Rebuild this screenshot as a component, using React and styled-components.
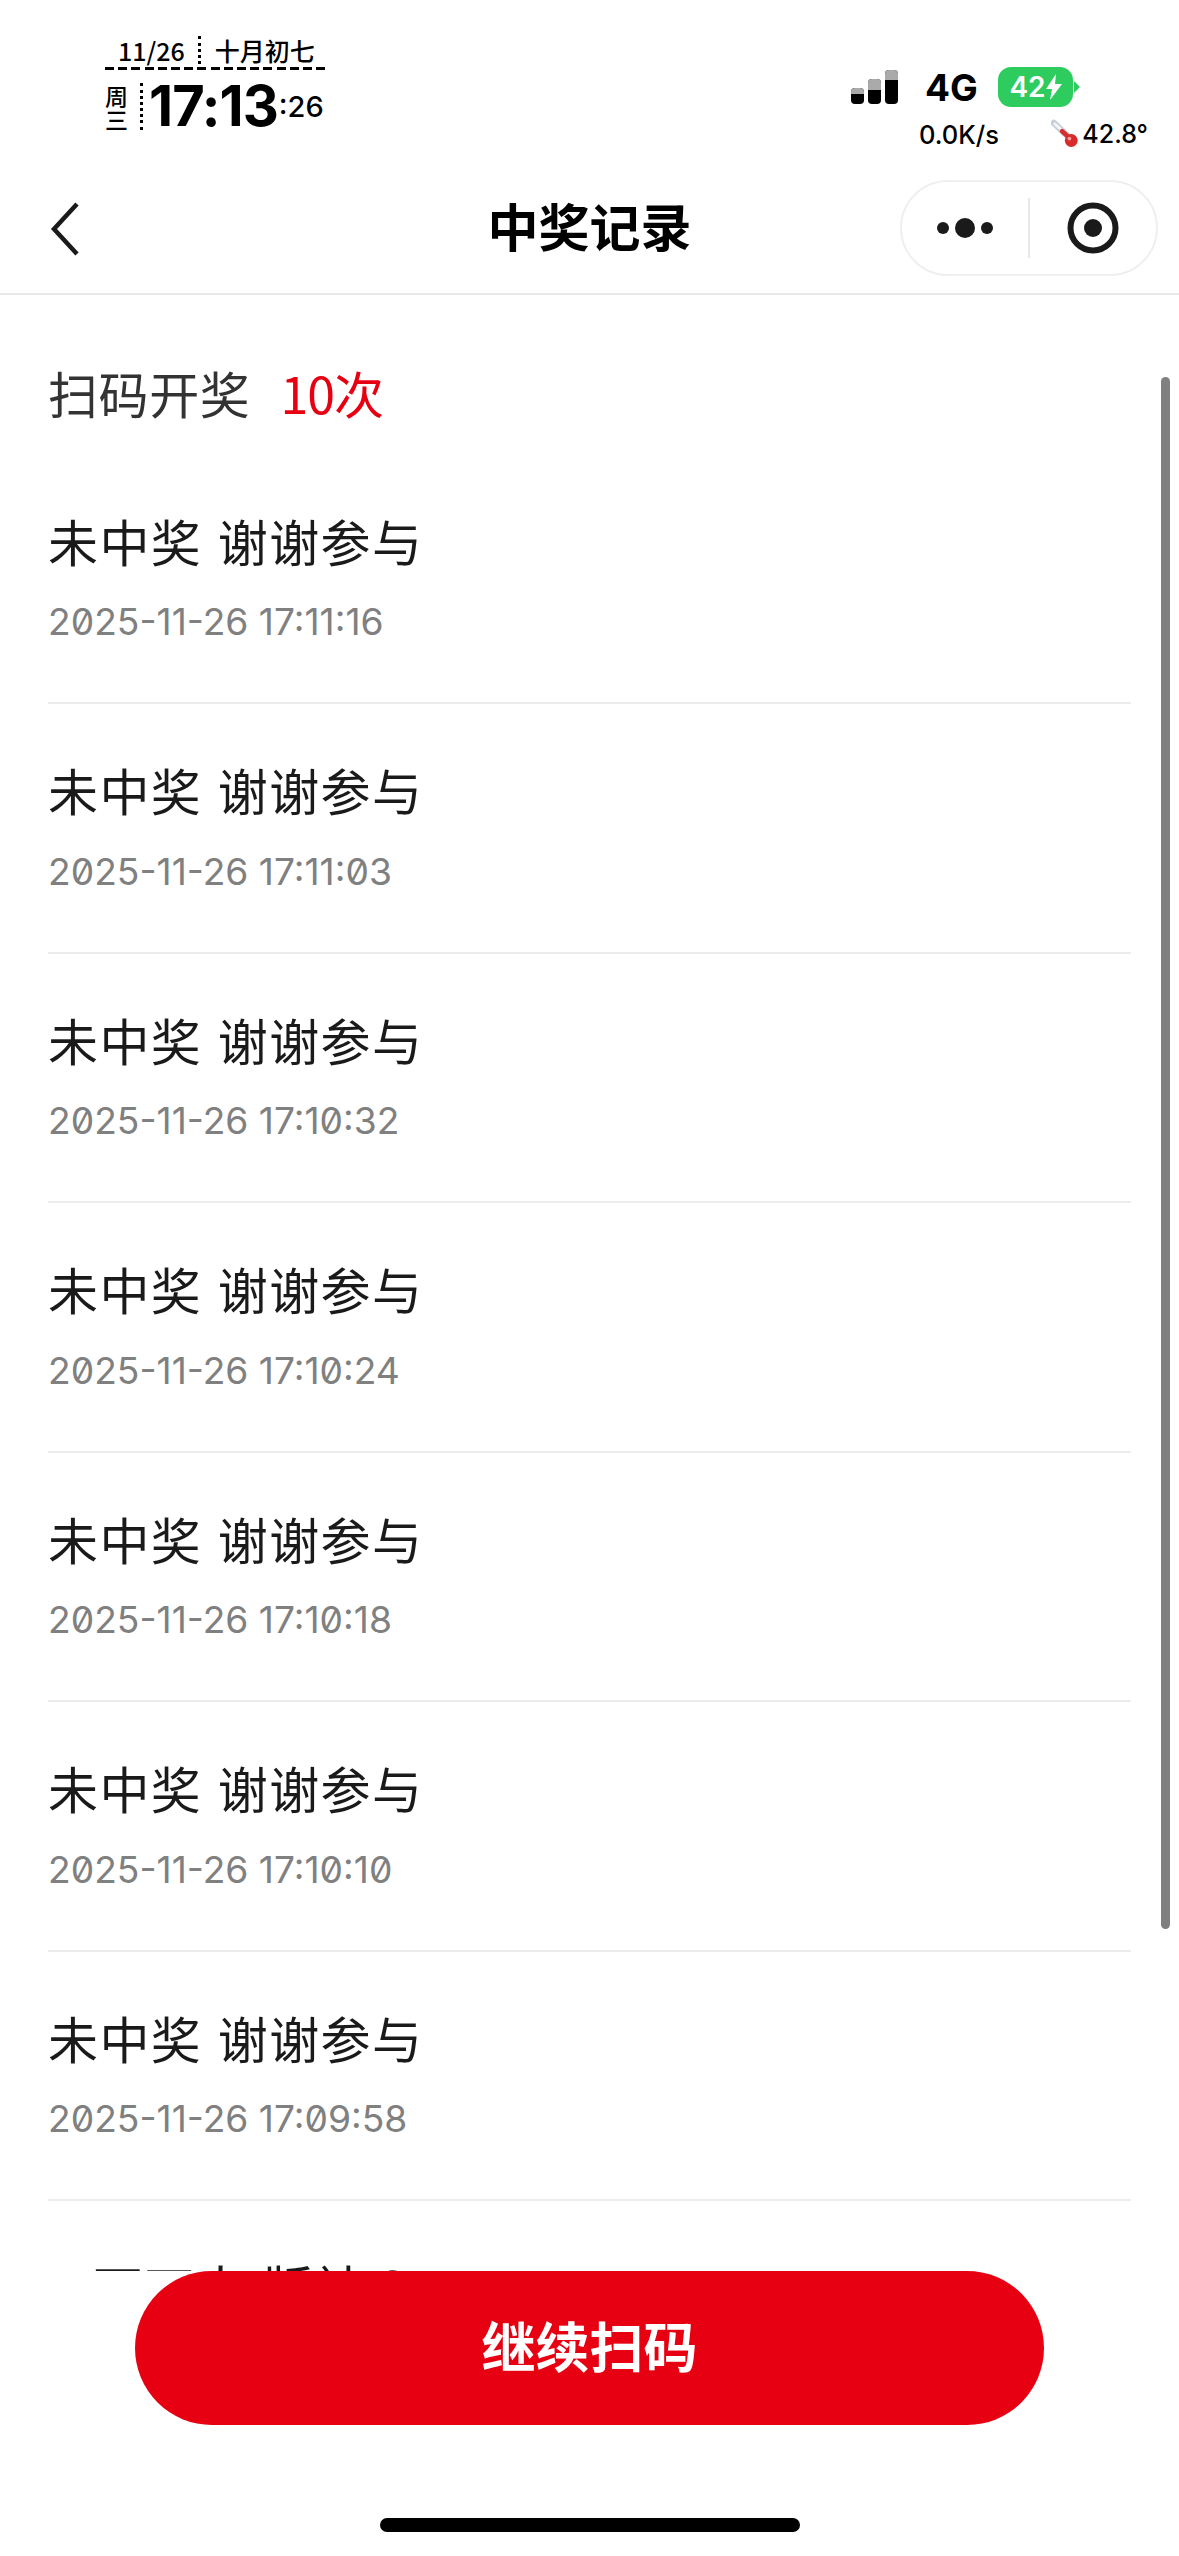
import React from 'react';
import styled, { createGlobalStyle } from 'styled-components';

const GlobalStyle = createGlobalStyle`
	html, body {
		margin: 0;
		padding: 0;
		background: #fff;
	}
	* {
		box-sizing: border-box;
	}
`;

const cjk = `"Noto Sans CJK SC", "Noto Sans", sans-serif`;
const latin = `Inter, "Noto Sans CJK SC", sans-serif`;

const Page = styled.div`
	width: 1179px;
	height: 2556px;
	position: relative;
	display: flex;
	flex-direction: column;
	background: #fff;
	overflow: hidden;
	color: #1a1a1a;
	font-family: ${cjk};
`;

const StatusBar = styled.div`
	height: 172px;
	flex: none;
	display: flex;
	justify-content: space-between;
	padding: 34px 31px 0 105px;
	color: #000;
`;

const Clock = styled.div`
	width: 220px;
`;

const DateRow = styled.div`
	height: 36px;
	display: flex;
	align-items: center;
	padding: 0 0 5px 13px;
	font-size: 25px;
	font-weight: 500;
	line-height: 30px;
	background: repeating-linear-gradient(90deg, #000 0 9px, transparent 9px 13.2px) left bottom / 100% 3px no-repeat;
`;

const DottedLine = styled.span`
	height: ${(p) => p.$h}px;
	margin: ${(p) => p.$m};
	border-left: 3px dotted #000;
`;

const TimeRow = styled.div`
	display: flex;
	align-items: center;
	margin-top: 13px;
	height: 47px;
`;

const Weekday = styled.div`
	width: 23px;
	font-size: 23px;
	line-height: 24px;
	text-align: center;
	font-weight: 500;
`;

const Big = styled.span`
	font-family: ${latin};
	font-size: 56px;
	font-weight: 700;
	line-height: 47px;
	letter-spacing: -1px;
`;

const Small = styled.span`
	font-family: ${latin};
	font-size: 29px;
	font-weight: 500;
	line-height: 47px;
	align-self: flex-end;
	margin: 6px 0 0 1px;
`;

const Signals = styled.div`
	width: 297px;
	padding-top: 33px;
`;

const SignalRow = styled.div`
	display: flex;
	align-items: center;
	height: 40px;
`;

const Net = styled.span`
	font-family: ${latin};
	font-size: 37px;
	font-weight: 700;
	width: 53px;
	margin: 0 20px 0 27px;
	white-space: nowrap;
`;

const Battery = styled.div`
	position: relative;
	width: 75px;
	height: 40px;
	border-radius: 13px;
	background: #2ecc5f;
	color: #fff;
	display: flex;
	align-items: center;
	justify-content: center;
	font-family: ${latin};
	font-size: 28px;
	font-weight: 600;
	&::after {
		content: '';
		position: absolute;
		right: -7px;
		top: 14px;
		border-left: 6px solid #2ecc5f;
		border-top: 6px solid transparent;
		border-bottom: 6px solid transparent;
	}
`;

const MetaRow = styled.div`
	display: flex;
	align-items: center;
	height: 34px;
	margin-top: 10px;
	padding-left: 68px;
	font-family: ${latin};
	font-size: 25.5px;
	font-weight: 500;
`;

const Speed = styled.span`
	width: 143px;
`;

const Temp = styled.span`
	margin-left: 4px;
	font-size: 25px;
`;

const Nav = styled.div`
	height: 123px;
	flex: none;
	display: flex;
	align-items: center;
	justify-content: space-between;
	padding: 0 21px 0 46px;
	position: relative;
	border-bottom: 2px solid #e8e8e8;
`;

const BackButton = styled.div`
	display: flex;
	margin-top: -8px;
`;

const NavTitle = styled.div`
	position: absolute;
	left: 0;
	right: 0;
	top: 21px;
	text-align: center;
	font-size: 51px;
	font-weight: 700;
	line-height: 64px;
	color: #000;
`;

const Capsule = styled.div`
	width: 258px;
	height: 96px;
	margin-top: -10px;
	border: 2px solid #efefef;
	border-radius: 48px;
	display: flex;
	align-items: center;
`;

const CapsuleCell = styled.div`
	flex: 1;
	display: flex;
	justify-content: center;
	align-items: center;
`;

const CapsuleDivider = styled.div`
	width: 2px;
	height: 60px;
	background: #e8e8e8;
`;

const List = styled.div`
	flex: 1;
	min-height: 0;
	overflow: hidden;
	padding: 59px 48px 0;
`;

const Summary = styled.div`
	display: flex;
	font-size: 50px;
	line-height: 76px;
	letter-spacing: 0.6px;
	color: #333;
	gap: 30px;
	margin-bottom: 24.5px;
`;

const Count = styled.span`
	color: #e60012;
	letter-spacing: -1px;
`;

const Record = styled.div`
	height: 249.5px;
	padding-top: 50px;
	border-bottom: 2px solid #ececec;
`;

const RecordTitle = styled.div`
	font-size: 50px;
	line-height: 70px;
	letter-spacing: 1.4px;
	word-spacing: 3px;
	color: #1a1a1a;
	white-space: nowrap;
`;

const RecordTime = styled.div`
	margin-top: 22.5px;
	font-family: ${latin};
	font-feature-settings: 'zero' 1;
	font-variant-numeric: slashed-zero;
	font-size: 37.2px;
	line-height: 50px;
	color: #808080;
`;

const Footer = styled.div`
	height: 285px;
	flex: none;
	background: #fff;
	position: relative;
`;

const ScanButton = styled.button`
	display: block;
	width: 909px;
	height: 154px;
	margin: 0 0 0 135px;
	padding: 0 0 8px;
	border: 0;
	border-radius: 77px;
	background: #e60012;
	color: #fff;
	font-family: ${cjk};
	font-size: 54px;
	font-weight: 700;
`;

const HomeBar = styled.div`
	position: absolute;
	left: 380px;
	bottom: 24px;
	width: 420px;
	height: 14px;
	border-radius: 7px;
	background: #000;
`;

const ScrollBar = styled.div`
	position: absolute;
	left: 1161px;
	top: 377px;
	width: 9px;
	height: 1552px;
	border-radius: 5px;
	background: #808080;
`;

const SignalIcon = () => (
	<svg width="47" height="34" viewBox="0 0 47 34">
		<rect x="0" y="18" width="13" height="16" rx="4" fill="#000" />
		<path d="M0 22a4 4 0 0 1 4-4h5a4 4 0 0 1 4 4v2H0z" fill="#aaa" />
		<rect x="17" y="9" width="13" height="25" rx="4" fill="#000" />
		<path d="M17 13a4 4 0 0 1 4-4h5a4 4 0 0 1 4 4v7H17z" fill="#aaa" />
		<rect x="34" y="0" width="13" height="34" rx="4" fill="#000" />
		<path d="M34 4a4 4 0 0 1 4-4h5a4 4 0 0 1 4 4v6H34z" fill="#aaa" />
	</svg>
);

const BoltIcon = () => (
	<svg width="16" height="26" viewBox="0 0 16 26">
		<path d="M10 0 0 15h6l-2 11 12-16H9z" fill="#fff" />
	</svg>
);

const ThermoIcon = () => (
	<svg width="30" height="30" viewBox="0 0 30 30">
		<path d="M3 3 L20 19" stroke="#c9ced6" strokeWidth="7" strokeLinecap="round" />
		<path d="M4 4 L12 11" stroke="#f2f4f7" strokeWidth="3" strokeLinecap="round" />
		<path d="M12 12 L21 20" stroke="#d32f2f" strokeWidth="5" strokeLinecap="round" />
		<circle cx="22" cy="22" r="7" fill="#d92b2b" />
		<circle cx="20" cy="20" r="2" fill="#f6a0a0" />
	</svg>
);

const BackIcon = () => (
	<svg width="34" height="54" viewBox="0 0 34 54">
		<path d="M31 2 8 27l23 25" fill="none" stroke="#1a1a1a" strokeWidth="4.5" />
	</svg>
);

const DotsIcon = () => (
	<svg width="56" height="20" viewBox="0 0 56 20">
		<circle cx="6" cy="10" r="6" fill="#1a1a1a" />
		<circle cx="28" cy="10" r="10" fill="#1a1a1a" />
		<circle cx="50" cy="10" r="6" fill="#1a1a1a" />
	</svg>
);

const TargetIcon = () => (
	<svg width="52" height="52" viewBox="0 0 52 52">
		<circle cx="26" cy="26" r="22.5" fill="none" stroke="#1a1a1a" strokeWidth="6" />
		<circle cx="26" cy="26" r="9" fill="#1a1a1a" />
	</svg>
);

const records = [
	'2025-11-26 17:11:16',
	'2025-11-26 17:11:03',
	'2025-11-26 17:10:32',
	'2025-11-26 17:10:24',
	'2025-11-26 17:10:18',
	'2025-11-26 17:10:10',
	'2025-11-26 17:09:58',
];

export default function App() {
	return (
		<Page>
			<GlobalStyle />
			<StatusBar>
				<Clock>
					<DateRow>
						<span>11/26</span>
						<DottedLine $h={28} $m="0 14px 0 13px" />
						<span>十月初七</span>
					</DateRow>
					<TimeRow>
						<Weekday>周三</Weekday>
						<DottedLine $h={47} $m="0 6px 0 12px" />
						<Big>17:13</Big>
						<Small>:26</Small>
					</TimeRow>
				</Clock>
				<Signals>
					<SignalRow>
						<SignalIcon />
						<Net>4G</Net>
						<Battery>
							42
							<BoltIcon />
						</Battery>
					</SignalRow>
					<MetaRow>
						<Speed>0.0K/s</Speed>
						<ThermoIcon />
						<Temp>42.8°</Temp>
					</MetaRow>
				</Signals>
			</StatusBar>
			<Nav>
				<BackButton>
					<BackIcon />
				</BackButton>
				<NavTitle>中奖记录</NavTitle>
				<Capsule>
					<CapsuleCell>
						<DotsIcon />
					</CapsuleCell>
					<CapsuleDivider />
					<CapsuleCell>
						<TargetIcon />
					</CapsuleCell>
				</Capsule>
			</Nav>
			<List>
				<Summary>
					<span>扫码开奖</span>
					<Count>10次</Count>
				</Summary>
				{records.map((time) => (
					<Record key={time}>
						<RecordTitle>未中奖 谢谢参与</RecordTitle>
						<RecordTime>{time}</RecordTime>
					</Record>
				))}
				<Record>
					<RecordTitle>¥ 万丁大 版社 ?</RecordTitle>
				</Record>
			</List>
			<Footer>
				<ScanButton>继续扫码</ScanButton>
				<HomeBar />
			</Footer>
			<ScrollBar />
		</Page>
	);
}
